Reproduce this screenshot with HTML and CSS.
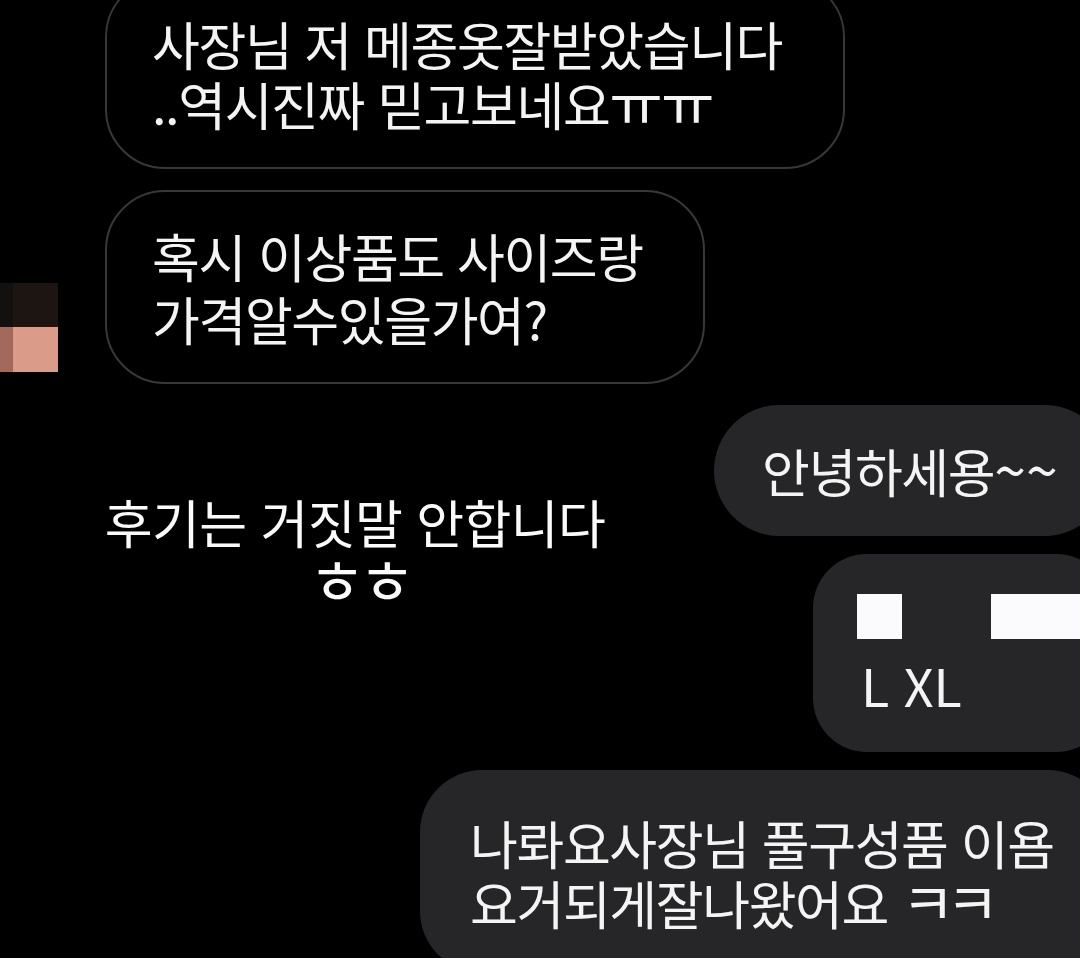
FILE: index.html
```html
<!DOCTYPE html>
<html lang="ko">
<head>
    <meta charset="UTF-8">
    <meta name="viewport" content="width=device-width, initial-scale=1.0">
    <title>메시지</title>
    <link rel="stylesheet" href="styles.css">
</head>
<body>
    <div class="chat">
        <div class="row row-in">
            <div class="avatar-slot"></div>
            <div class="bubble bubble-in msg-1">사장님 저 메종옷잘받았습니다<br>..역시진짜 믿고보네요<span class="jamo">ㅠㅠ</span></div>
        </div>

        <div class="row row-in">
            <!-- 모자이크 처리된 프로필 -->
            <div class="avatar-slot avatar">
                <span class="px px-1"></span>
                <span class="px px-2"></span>
                <span class="px px-3"></span>
                <span class="px px-4"></span>
            </div>
            <div class="bubble bubble-in msg-2">혹시 이상품도 사이즈랑<br>가격알수있을가여?</div>
        </div>

        <div class="row row-out">
            <div class="bubble bubble-out msg-3">안녕하세용<span class="tilde">~~</span></div>
        </div>

        <div class="row row-out">
            <div class="bubble bubble-out msg-4">
                <div class="hidden-line">
                    <span class="blank blank-sm"></span>
                    <span class="blank blank-lg"></span>
                </div>
                <div class="size-line">L XL</div>
            </div>
        </div>

        <div class="row row-out">
            <div class="bubble bubble-out msg-5">나롸요사장님 풀구성품 이욤<br>요거되게잘나왔어요 <span class="jamo jamo-tight">ㅋㅋ</span></div>
        </div>

        <div class="caption">
            <p>후기는 거짓말 안합니다</p>
            <p class="caption-sub">ㅎㅎ</p>
        </div>
    </div>
</body>
</html>
```

FILE: styles.css
```css
* {
    margin: 0;
    padding: 0;
    box-sizing: border-box;
}

html, body {
    height: 100%;
    overflow: hidden;
}

body {
    background: #000;
    color: #f4f4f4;
    font-family: 'Noto Sans CJK KR', 'Noto Sans', sans-serif;
}

.chat {
    position: relative;
    display: flex;
    flex-direction: column;
    gap: 21px;
    margin-top: -23px;
}

.row {
    display: flex;
}

.row-in {
    gap: 47px;
}

.row-out {
    justify-content: flex-end;
    margin-right: -30px;
}

.row-out + .row-out {
    margin-top: -3px;
}

.avatar-slot {
    width: 58px;
    flex-shrink: 0;
}

.avatar {
    align-self: flex-end;
    margin-bottom: 12px;
    display: grid;
    grid-template-columns: 13px 45px;
    grid-template-rows: 44px 45px;
    height: 89px;
}

.px-1 { background: #131010; }
.px-2 { background: #1d1512; border-bottom: 2px solid #2a100b; }
.px-3 { background: #a4695d; }
.px-4 { background: #da9b89; }

.bubble {
    font-size: 52px;
    letter-spacing: -1.4px;
    line-height: 60px;
    white-space: nowrap;
}

.jamo {
    font-size: 1.12em;
    line-height: 0;
    letter-spacing: -2px;
}

.jamo-tight {
    letter-spacing: -9px;
}

.tilde {
    font-size: 1.1em;
    line-height: 0;
    letter-spacing: 0;
}

.bubble-in {
    border: 2px solid #383838;
    border-radius: 60px;
    padding-left: 45px;
}

.bubble-out {
    background: #262628;
    border-radius: 62px;
}

.msg-1 {
    width: 740px;
    padding-top: 35px;
    padding-bottom: 33px;
}

.msg-2 {
    width: 600px;
    line-height: 63px;
    padding-top: 32px;
    padding-bottom: 32px;
}

.msg-3 {
    width: 396px;
    padding: 36px 0 35px 48px;
    border-radius: 66px;
}

.msg-4 {
    width: 297px;
    padding: 40px 0 37px 48px;
    border-radius: 54px;
}

.hidden-line {
    display: flex;
    gap: 89px;
    height: 45px;
    margin-left: -4px;
}

.blank {
    display: block;
    height: 45px;
    background: #fbfbfd;
}

.blank-sm {
    width: 45px;
}

.blank-lg {
    width: 110px;
}

.size-line {
    margin-top: 16px;
    font-size: 52px;
    letter-spacing: 0;
}

.msg-5 {
    width: 690px;
    padding: 43px 0 40px 50px;
}

.caption {
    position: absolute;
    top: 515px;
    left: 80px;
    width: 550px;
    text-align: center;
    font-size: 52px;
    line-height: 60px;
    letter-spacing: -0.6px;
    color: #fafafa;
}

.caption-sub {
    font-size: 62px;
    letter-spacing: -7px;
    text-indent: 7px;
    margin-top: -4px;
}
```
